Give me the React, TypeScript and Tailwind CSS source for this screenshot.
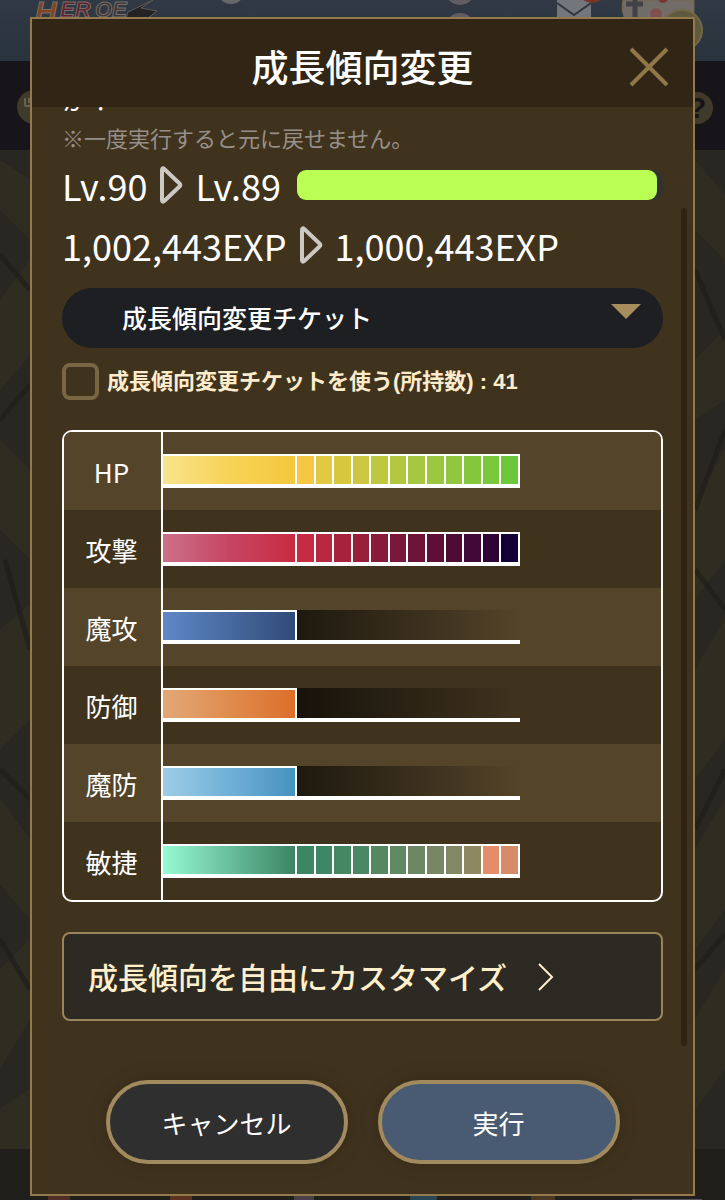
import { ChangeEvent, useState } from "react";

type Stat = { name: string; base: string; cells: string[] };

const stats: Stat[] = [
  {
    name: "HP",
    base: "from-[#f8e38c] via-[#f7d355] to-[#f4c83f]",
    cells: ["#f6c745", "#e3c841", "#d6c73e", "#cbc742", "#bdc73f", "#b2c840", "#a6c740", "#9bc73f", "#90c73f", "#84c73c", "#79c73b", "#6dc73a"],
  },
  {
    name: "攻撃",
    base: "from-[#cb708a] via-[#c74463] to-[#c92a40]",
    cells: ["#c72b42", "#b82640", "#a7223c", "#981e3a", "#891b3a", "#7b173a", "#6c1338", "#5e0e37", "#4e0b36", "#400737", "#2f0334", "#150036"],
  },
  { name: "魔攻", base: "from-[#5f87c6] via-[#476a9f] to-[#314b78]", cells: [] },
  { name: "防御", base: "from-[#e3a877] via-[#df8c4e] to-[#dc6f28]", cells: [] },
  { name: "魔防", base: "from-[#9dcde7] via-[#70b0d7] to-[#4593c0]", cells: [] },
  {
    name: "敏捷",
    base: "from-[#96fad3] via-[#69bf9b] to-[#3c8464]",
    cells: ["#3c8663", "#3e8764", "#458663", "#4a8763", "#558762", "#5f8863", "#6b8862", "#778763", "#838864", "#8f8762", "#e58d69", "#d68c68"],
  },
];

function Backdrop() {
  return (
    <div aria-hidden="true" className="absolute inset-0 -z-10 flex flex-col overflow-hidden bg-[#292820]">
      <div className="h-[61px] bg-linear-to-b from-[#303944] to-[#29333e]" />
      <div className="h-[89px] bg-[#18151a]" />
      <svg className="min-h-0 w-full flex-1" viewBox="0 0 725 1000" preserveAspectRatio="none">
        <rect width="725" height="1000" fill="#292721" />
        <g fill="#323023" opacity=".7">
          <path d="M0 10 30 30V90L0 60ZM0 150 30 110V205L0 240ZM0 290 30 320V410L0 380ZM0 480 30 455V570L0 600ZM0 650 30 690V770L0 735ZM0 820 30 790V870L0 920ZM0 960 30 940V1000H0Z" />
          <path d="M695 10 725 45V110L695 80ZM695 210 725 180V250L695 270ZM695 350 725 300V410L695 450ZM695 520 725 470V590L695 630ZM695 700 725 650V760L695 800ZM695 870 725 820V920L695 960Z" />
        </g>
        <g fill="none" stroke="#211f1c" strokeWidth="5" opacity=".8">
          <path d="M0 105 30 140M0 270 30 235M5 410 30 500M0 620 30 650M0 790 30 840M695 120 725 190M725 280 695 360M695 420 725 460M725 620 695 680M695 820 725 785" />
        </g>
      </svg>
      <div className="h-[51px] bg-[#211f1c]" />
      <svg className="absolute top-0 left-0" width="180" height="130">
        <g fontFamily="Liberation Sans" fontWeight="700" fontStyle="italic" stroke="#77706a" strokeWidth="1">
          <text x="35" y="22" fontSize="30" fill="#824522">H</text>
          <text x="60" y="17" fontSize="22" fill="#641e2e">ER</text>
          <text x="95" y="17" fontSize="22" fill="#3f3639">OE</text>
        </g>
        <path d="M128 12 153 0 141 8 157 11 148 18H126Z" fill="#242323" stroke="#5e5b59" />
        <circle cx="34" cy="107" r="17" fill="#3f3a29" />
        <path d="M25 98v8m4-8v5m-4 3h5" stroke="#67604a" strokeWidth="2" />
      </svg>
      <svg className="absolute top-0 right-0" width="510" height="130">
        <circle cx="16" cy="-10" r="14" fill="#686768" />
        <circle cx="245" cy="-10" r="15" fill="#615d62" />
        <circle cx="245" cy="28" r="15" fill="#615d62" />
        <path d="M342 0h34v20h-34Z" fill="#73767a" />
        <path d="m342 3 17 12 17-12" fill="none" stroke="#303640" strokeWidth="2" />
        <circle cx="377" cy="-12" r="15" fill="#7b3426" />
        <path d="M408 0h71v22h-67Q405 12 408 0Z" fill="#716c68" stroke="#746746" />
        <circle cx="448" cy="-2" r="5" fill="#7a3431" />
        <circle cx="441" cy="14" r="6" fill="#80504e" />
        <path d="M411 4h17M420 0v18" stroke="#434146" strokeWidth="5" />
        <circle cx="467" cy="30" r="20" fill="#5f593f" stroke="#746746" strokeWidth="2" />
        <circle cx="482" cy="108" r="16" fill="#3f3a29" />
        <text x="473" y="118" fontFamily="Liberation Sans" fontWeight="700" fontSize="30" fill="#17151a">?</text>
      </svg>
      <svg className="absolute bottom-0 left-0 w-full" height="5">
        <path d="M48 0h22v5H48Z" fill="#512d28" />
        <path d="M170 0h22v5h-22Z" fill="#5b3320" />
        <path d="M294 0h20v5h-20Z" fill="#494147" />
        <path d="M410 0h27v5h-27Z" fill="#2a4553" />
        <path d="M531 0h24v5h-24Z" fill="#4b3824" />
        <path d="M632 4h70v1h-70Z" fill="#55555a" />
      </svg>
    </div>
  );
}

function Arrow() {
  return (
    <svg aria-hidden="true" width="24" height="38" viewBox="0 0 24 38" fill="none" className="shrink-0">
      <path d="M3 4Q3 1 5.500 3.200L20.500 17.500Q22 19 20.500 20.500L5.500 34.800Q3 37 3 34Z" stroke="#ccc9c3" strokeWidth="4" strokeLinejoin="round" />
    </svg>
  );
}

function StatBar({ stat }: { stat: Stat }) {
  return (
    <div className="flex h-[34px] w-[357px] border-b-4 border-white">
      <div className={`w-[134px] shrink-0 border-t-2 border-r-2 border-white bg-linear-to-r ${stat.base}`} />
      {stat.cells.length > 0 ? (
        stat.cells.map((color) => (
          <div key={color} className="flex-1 border-t-2 border-r-2 border-white" style={{ backgroundColor: color }} />
        ))
      ) : (
        <div className="flex-1 bg-linear-to-r from-black/65 to-transparent" />
      )}
    </div>
  );
}

export default function App() {
  const [useTicket, setUseTicket] = useState(false);

  return (
    <div className="relative isolate flex min-h-screen flex-col px-[30px] pt-[17px] pb-1 font-['Noto_Sans_CJK_JP',sans-serif] text-white">
      <Backdrop />
      <div role="dialog" aria-labelledby="dialog-title" className="relative flex flex-1 flex-col border-2 border-[#94794c] bg-[#40331e]">
        <header className="relative flex h-[88px] items-center justify-center bg-[#312615] pt-2">
          <h1 id="dialog-title" className="text-[37px] font-medium">成長傾向変更</h1>
          <button type="button" aria-label="閉じる" className="absolute right-6 flex size-10 items-center justify-center">
            <svg width="40" height="40" viewBox="0 0 40 40" stroke="#8f7747" strokeWidth="4">
              <path d="M2 2 38 38M38 2 2 38" />
            </svg>
          </button>
        </header>

        <main className="flex flex-1 flex-col overflow-hidden px-[30px] pb-[30px]">
          <p className="-mt-[26px] text-[26px] leading-[36px]">か？</p>
          <p className="text-[22px] leading-[40px] text-[#969089]">※一度実行すると元に戻せません。</p>

          <div className="mt-[3px] flex h-[50px] items-center text-[36px] leading-[50px]">
            <span>Lv.90</span>
            <span className="mx-3"><Arrow /></span>
            <span>Lv.89</span>
            <div className="ml-4 h-[30px] flex-1 rounded-[9px] bg-[#343231] pr-1.5">
              <div className="h-full rounded-[9px] bg-[#b9ff54]" />
            </div>
          </div>
          <div className="mt-2.5 flex h-[50px] items-center text-[36px] leading-[50px]">
            <span>1,002,443EXP</span>
            <span className="mx-3"><Arrow /></span>
            <span>1,000,443EXP</span>
          </div>

          <div className="relative mt-[18px]">
            <select aria-label="使用するチケット" className="h-[60px] w-full appearance-none rounded-full bg-[#1e1f23] px-[60px] text-[25px] font-medium">
              <option>成長傾向変更チケット</option>
            </select>
            <svg aria-hidden="true" width="30" height="15" className="pointer-events-none absolute top-4 right-[22px]">
              <path d="M0 0h30L15 15Z" fill="#a68d5b" />
            </svg>
          </div>

          <label className="mt-[15px] flex items-center gap-2 font-['Liberation_Sans','Noto_Sans_CJK_JP',sans-serif] text-[22px] font-bold text-[#fdeccb]">
            <input
              type="checkbox"
              checked={useTicket}
              onChange={(e: ChangeEvent<HTMLInputElement>) => setUseTicket(e.target.checked)}
              className="size-[37px] appearance-none rounded-lg border-4 border-[#7b6644] checked:bg-[#7b6644]"
            />
            <span>成長傾向変更チケットを使う(所持数) : 41</span>
          </label>

          <div className="mt-[30px] overflow-hidden rounded-[10px] border-2 border-white">
            <table className="w-full border-collapse">
              <tbody>
                {stats.map((stat) => (
                  <tr key={stat.name} className="h-[78px] odd:bg-[#544429]">
                    <th scope="row" className="w-[99px] py-0 pr-1 pl-0 text-[26px] font-normal shadow-[inset_-2px_0_0_#fff]">{stat.name}</th>
                    <td className="p-0"><StatBar stat={stat} /></td>
                  </tr>
                ))}
              </tbody>
            </table>
          </div>

          <button type="button" className="mt-[30px] flex h-[89px] items-center gap-[30px] rounded-lg border-2 border-[#9c845a] bg-[#2d2923] px-6 text-[30px] font-medium text-[#fff0cb]">
            成長傾向を自由にカスタマイズ
            <svg width="18" height="28" viewBox="0 0 18 28" fill="none" stroke="#fff0cb" strokeWidth="2">
              <path d="M2 1 15 14 2 27" />
            </svg>
          </button>

          <div className="mt-auto flex justify-center gap-[30px] text-[26px]">
            <button type="button" className="h-[84px] w-[242px] rounded-full border-4 border-[#a08a5e] bg-[#302f30] shadow-[0_0_20px_rgba(0,0,0,0.2)]">キャンセル</button>
            <button type="button" className="h-[84px] w-[242px] rounded-full border-4 border-[#a08a5e] bg-[#495b72] shadow-[0_0_20px_rgba(0,0,0,0.2)]">実行</button>
          </div>
        </main>
        <div aria-hidden="true" className="absolute top-[189px] right-1.5 h-[838px] w-1.5 rounded-full bg-[#2f2314]" />
      </div>
    </div>
  );
}
